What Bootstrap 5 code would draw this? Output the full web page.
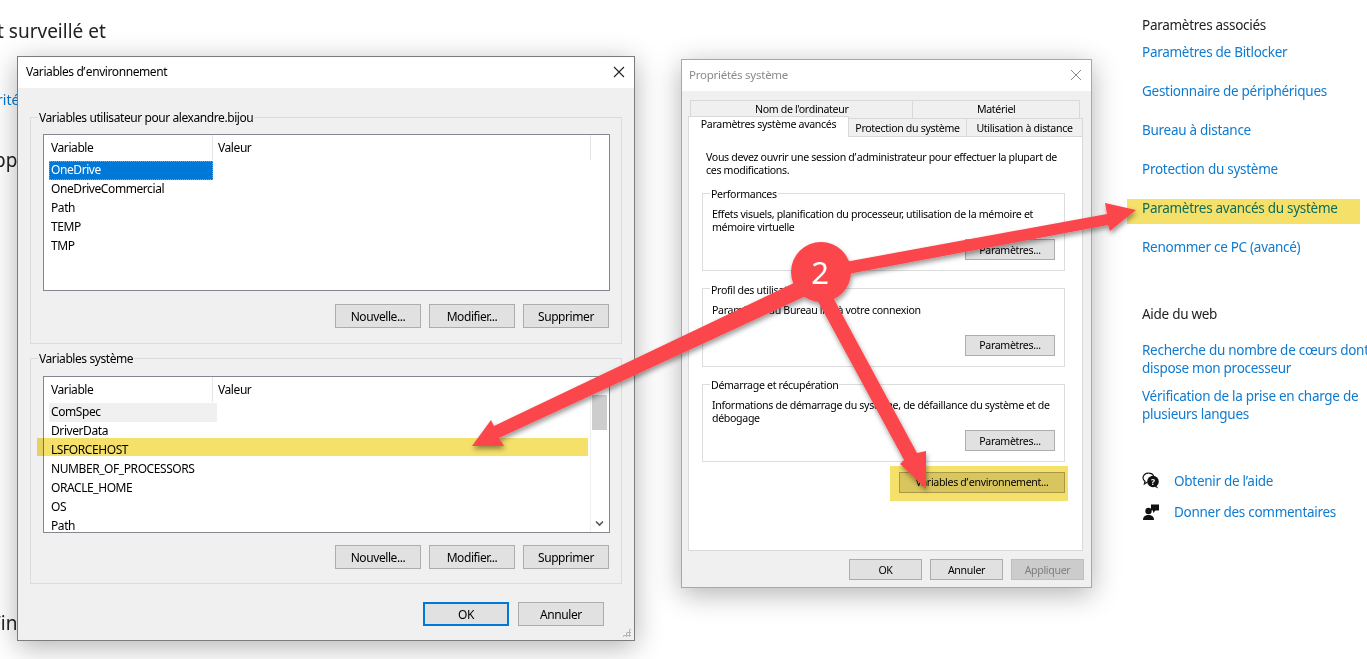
<!DOCTYPE html>
<html lang="fr">
<head>
  <meta charset="UTF-8">
  <title>Variables d'environnement</title>
  <link rel="stylesheet" href="https://cdn.jsdelivr.net/npm/bootstrap@5.3.1/dist/css/bootstrap.min.css" crossorigin="anonymous">
  <style>
    html, body { height: 659px; overflow: hidden; }
    body { font-family: "Noto Sans", "Open Sans", sans-serif; background: #fff; color: #000; position: relative; }
    a { text-decoration: none; }
    .page-text { width: 1145px; margin-left: -3px; flex: none; font-size: 19px; line-height: 24px; color: #222; }
    .page-text p { margin: 0; }
    .line-a { padding-top: 19px; }
    .line-b { padding-top: 45px; color: #0078d4; font-size: 14px; }
    .line-c { padding-top: 36px; margin-left: -3px !important; }
    .line-d { padding-top: 439px; margin-left: -6px !important; }
    .side { width: 235px; flex: none; font-size: 13.5px; letter-spacing: -.28px; padding-top: 16px; }
    .side a { color: #0f7bd0; display: block; line-height: 18px; }
    .side h2 { font-size: 13.5px; font-weight: 400; line-height: 18px; margin: 0; color: #222; }
    .side-links { margin-top: 9px; }
    .side-links a { padding-bottom: 21px; }
    .side h2.side-web { margin-top: 28px; }
    .side-web-links { margin-top: 18px; }
    .side-web-links a + a { margin-top: 10px; }
    .side-help { margin-top: 49px; gap: 13px; }
    .side-help svg { width: 18px; height: 18px; flex: none; }
    .help-row { gap: 14px; }

    .win { position: absolute; background: #f0f0f0; font-size: 12px; letter-spacing: -.42px; box-shadow: 0 6px 26px rgba(0,0,0,.3); }
    .win-a { left: 17px; top: 56px; width: 618px; height: 585px; border: 1px solid #7c7c7c; }
    .win-b { left: 681px; top: 59px; width: 411px; height: 529px; border: 1px solid #a8a8a8; font-size: 10.6px; letter-spacing: -.33px; }
    .win-title { height: 31px; background: #fff; padding-left: 8px; padding-bottom: 2px; }
    .win-b .win-title { color: #8a8a8a; font-size: 11.5px; padding-left: 7px; letter-spacing: -.25px; }
    .win-x { width: 12px; height: 12px; margin-right: 9px; }
    .w-btn { height: 24px; width: 86px; padding: 0; border: 1px solid #adadad; border-radius: 0; background: #e1e1e1; color: #000; font-size: inherit; letter-spacing: inherit; line-height: 21px; }
    .w-btn.is-default { border: 2px solid #0078d7; }
    .win-b .w-btn { height: 21px; width: 73px; line-height: 18px; }
    .win-b .w-btn.is-wide { width: 90px; }
    .win-b .w-btn.is-env { width: 166px; }
    .w-btn:disabled { background: #ccc; color: #7f7f7f; border-color: #bfbfbf; opacity: 1; }

    fieldset.grp { border: 1px solid #dcdcdc; padding: 0 12px 14px 12px; }
    fieldset.grp legend { float: none; width: auto; font-size: inherit; height: 16px; line-height: 18px; margin: 0 0 0 -5px; padding: 0 1px; }
    .grp-one { margin: 21px 12px 0; height: 235px; }
    .grp-two { margin: 6px 12px 0; height: 234px; }
    .vlist { position: relative; height: 157px; margin-top: 9px; margin-bottom: 13px; margin-right: -1px; background: #fff; border: 1px solid #828790; overflow: hidden; }
    .vhead { height: 26px; line-height: 25px; }
    .vhead span { display: block; padding-left: 7px; border-right: 1px solid #e5e5e5; height: 25px; }
    .vhead .col-var { width: 169px; }
    .vhead .col-val { width: 378px; padding-left: 5px; }
    .vrow { height: 19px; line-height: 18px; margin-left: 5px; padding-left: 2px; width: 164px; white-space: nowrap; }
    .vrow.is-sel { background: #0078d7; color: #fff; outline: 1px dotted #f08a24; outline-offset: -1px; }
    .vrow.is-idle { background: #f0f0f0; width: 168px; }
    .vlist-sys { margin-top: 10px; margin-bottom: 12px; }
    .vlist-sys::after { content: ""; position: absolute; left: 173px; right: 21px; bottom: -1px; height: 2px; background: #fff; }
    .vscroll { position: absolute; right: 0; top: 0; bottom: 0; width: 19px; background: #fff; border-left: 1px solid #f0f0f0; }
    .vthumb { position: absolute; left: 1px; right: 2px; top: 18px; height: 35px; background: #cdcdcd; }
    .vchev { position: absolute; left: 4px; bottom: 5px; width: 9px; height: 7px; }
    .grip { position: absolute; right: 3px; bottom: 3px; width: 9px; height: 9px; background: radial-gradient(circle, #b4b4b4 1px, transparent 1.2px) 0 0 / 3px 3px; clip-path: polygon(100% 0, 100% 100%, 0 100%); }
    .win-a-foot { margin: 18px 30px 0 0; gap: 9px; }

    .tabs-up { margin: 9px 11px 0 8px; height: 18px; }
    .tab-x { background: #f0f0f0; border: 1px solid #d9d9d9; text-align: center; line-height: 16px; }
    .tabs-up .tab-x { height: 19px; border-bottom: 0; }
    .tab-name { width: 224px; }
    .tab-hw { width: 168px; margin-left: -1px; }
    .tabs-low { margin: 0 8px 0 6px; height: 19px; align-items: flex-end; }
    .tab-on { width: 161px; height: 21px; background: #fff; border: 1px solid #d9d9d9; border-bottom: 0; position: relative; z-index: 2; line-height: 15px; text-align: center; margin-top: -2px; }
    .tab-prot { width: 119px; height: 19px; margin-left: -1px; line-height: 18px; }
    .tab-rem { width: 117px; height: 19px; margin-left: -1px; line-height: 18px; }
    .panel { margin: -1px 8px 0 6px; height: 415px; background: #fff; border: 1px solid #d9d9d9; padding: 14px 17px 0 13px; line-height: 13px; position: relative; }
    .panel p { margin: 0; }
    .panel-lead { padding-left: 4px; height: 34px; }
    .panel fieldset.grp { background: #fff; padding: 0 9px; height: 86px; margin-bottom: 9.5px; }
    .panel fieldset.grp legend { margin-left: -2px; }
    .panel .grp-text { height: 31px; margin-top: 7px; }
    .win-foot { margin: 8px 7px 0 0; gap: 8px; }

    .mark-y { position: absolute; background: #f5e06a; mix-blend-mode: multiply; z-index: 5; }
    .my-a { left: 37px; top: 438px; width: 551px; height: 18px; }
    .my-b { left: 890px; top: 466px; width: 178px; height: 35px; }
    .my-c { left: 1127px; top: 199px; width: 233px; height: 25px; }
    .overlay { position: absolute; left: 0; top: 0; width: 1367px; height: 659px; z-index: 6; pointer-events: none; }
    .overlay text { font-family: "Noto Sans", sans-serif; font-size: 31px; fill: #fff; }
  </style>
</head>
<body>
  <div class="d-flex">
    <div class="page-text">
      <p class="line-a">t surveillé et</p>
      <p class="line-b">rité</p>
      <p class="line-c">pp</p>
      <p class="line-d">Fin</p>
    </div>
    <aside class="side">
      <h2>Paramètres associés</h2>
      <div class="side-links">
        <a href="#">Paramètres de Bitlocker</a>
        <a href="#">Gestionnaire de périphériques</a>
        <a href="#">Bureau à distance</a>
        <a href="#">Protection du système</a>
        <a href="#">Paramètres avancés du système</a>
        <a href="#">Renommer ce PC (avancé)</a>
      </div>
      <h2 class="side-web">Aide du web</h2>
      <div class="side-web-links">
        <a href="#">Recherche du nombre de cœurs dont dispose mon processeur</a>
        <a href="#">Vérification de la prise en charge de plusieurs langues</a>
      </div>
      <div class="side-help d-flex flex-column">
        <div class="help-row d-flex align-items-center">
          <svg viewBox="0 0 18 18"><path d="M6.500 1.200C3.400 1.200 1 3.200 1 5.800c0 1.500.8 2.700 2 3.500L2.400 12l3-2" fill="none" stroke="#111" stroke-width="1.200"/><path d="M6.500 1.200c2.400 0 4.500 1.200 5.200 3" fill="none" stroke="#111" stroke-width="1.200"/><circle cx="11" cy="9.500" r="5.800" fill="#111"/><path d="M14 13.500l2.500 3-4.500-2z" fill="#111"/><text x="11" y="12.600" font-size="8.500" font-weight="700" text-anchor="middle" fill="#fff" font-family="Noto Sans">?</text></svg>
          <a href="#">Obtenir de l’aide</a>
        </div>
        <div class="help-row d-flex align-items-center">
          <svg viewBox="0 0 18 18"><circle cx="6.500" cy="8" r="3.200" fill="#111"/><path d="M1 17c0-3.600 2.400-5 5.500-5s5.500 1.400 5.500 5z" fill="#111"/><path d="M9 1.500h8v6h-3.500L11 10V7.500H9z" fill="#111"/></svg>
          <a href="#">Donner des commentaires</a>
        </div>
      </div>
    </aside>
  </div>

  <!-- fenetre variables -->
  <section class="win win-a">
    <div class="win-title d-flex justify-content-between align-items-center">
      <span>Variables d’&#8202;environnement</span>
      <svg class="win-x" viewBox="0 0 12 12"><path d="M1 1l10 10M11 1L1 11" stroke="#222" stroke-width="1.100"/></svg>
    </div>
    <fieldset class="grp grp-one">
      <legend>Variables utilisateur pour alexandre.bijou</legend>
      <div class="vlist">
        <div class="vhead d-flex"><span class="col-var">Variable</span><span class="col-val">Valeur</span></div>
        <div class="vrow is-sel">OneDrive</div>
        <div class="vrow">OneDriveCommercial</div>
        <div class="vrow">Path</div>
        <div class="vrow">TEMP</div>
        <div class="vrow">TMP</div>
      </div>
      <div class="d-flex justify-content-end gap-2">
        <button class="btn w-btn">Nouvelle...</button>
        <button class="btn w-btn">Modifier...</button>
        <button class="btn w-btn">Supprimer</button>
      </div>
    </fieldset>
    <fieldset class="grp grp-two">
      <legend>Variables système</legend>
      <div class="vlist vlist-sys">
        <div class="vhead d-flex"><span class="col-var">Variable</span><span class="col-val">Valeur</span></div>
        <div class="vrow is-idle">ComSpec</div>
        <div class="vrow">DriverData</div>
        <div class="vrow">LSFORCEHOST</div>
        <div class="vrow">NUMBER_OF_PROCESSORS</div>
        <div class="vrow">ORACLE_HOME</div>
        <div class="vrow">OS</div>
        <div class="vrow">Path</div>
        <div class="vscroll">
          <div class="vthumb"></div>
          <svg class="vchev" viewBox="0 0 9 7"><path d="M1 1.500l3.500 3.500L8 1.500" fill="none" stroke="#555" stroke-width="1.600"/></svg>
        </div>
      </div>
      <div class="d-flex justify-content-end gap-2">
        <button class="btn w-btn">Nouvelle...</button>
        <button class="btn w-btn">Modifier...</button>
        <button class="btn w-btn">Supprimer</button>
      </div>
    </fieldset>
    <div class="win-a-foot d-flex justify-content-end">
      <button class="btn w-btn is-default">OK</button>
      <button class="btn w-btn">Annuler</button>
    </div>
    <div class="grip"></div>
  </section>

  <!-- fenetre proprietes -->
  <section class="win win-b">
    <div class="win-title d-flex justify-content-between align-items-center">
      <span>Propriétés système</span>
      <svg class="win-x" viewBox="0 0 12 12"><path d="M1 1l10 10M11 1L1 11" stroke="#8a8a8a" stroke-width="1"/></svg>
    </div>
    <div class="tabs-up d-flex">
      <div class="tab-x tab-name">Nom de l'ordinateur</div>
      <div class="tab-x tab-hw">Matériel</div>
    </div>
    <div class="tabs-low d-flex">
      <div class="tab-on">Paramètres système avancés</div>
      <div class="tab-x tab-prot">Protection du système</div>
      <div class="tab-x tab-rem">Utilisation à distance</div>
    </div>
    <div class="panel">
      <p class="panel-lead">Vous devez ouvrir une session d’&#8202;administrateur pour effectuer la plupart de ces modifications.</p>
      <fieldset class="grp">
        <legend>Performances</legend>
        <p class="grp-text">Effets visuels, planification du processeur, utilisation de la mémoire et mémoire virtuelle</p>
        <div class="d-flex justify-content-end"><button class="btn w-btn is-wide">Paramètres...</button></div>
      </fieldset>
      <fieldset class="grp">
        <legend>Profil des utilisateurs</legend>
        <p class="grp-text">Paramètres du Bureau liés à votre connexion</p>
        <div class="d-flex justify-content-end"><button class="btn w-btn is-wide">Paramètres...</button></div>
      </fieldset>
      <fieldset class="grp">
        <legend>Démarrage et récupération</legend>
        <p class="grp-text">Informations de démarrage du système, de défaillance du système et de débogage</p>
        <div class="d-flex justify-content-end"><button class="btn w-btn is-wide">Paramètres...</button></div>
      </fieldset>
      <div class="d-flex justify-content-end"><button class="btn w-btn is-env">Variables d’&#8202;environnement...</button></div>
    </div>
    <div class="win-foot d-flex justify-content-end">
      <button class="btn w-btn">OK</button>
      <button class="btn w-btn">Annuler</button>
      <button class="btn w-btn" disabled>Appliquer</button>
    </div>
  </section>

  <div class="mark-y my-a"></div>
  <div class="mark-y my-b"></div>
  <div class="mark-y my-c"></div>

  <svg class="overlay" viewBox="0 0 1367 659">
    <defs>
      <filter id="arrowShade" x="-10%" y="-10%" width="120%" height="120%">
        <feDropShadow dx="1" dy="3" stdDeviation="2.500" flood-color="#000" flood-opacity=".4"/>
      </filter>
    </defs>
    <g fill="#fb464c" filter="url(#arrowShade)">
      <path d="M845 262L1107 214L1105 203L1136 210L1110 231L1108 225L848 274Z"/>
      <path d="M796 282L494 426L491 420L472 446L504 446L499 438L806 296Z"/>
      <path d="M815 296L829 290L917 453L926 451L926 489L900 464L904 460Z"/>
      <circle cx="821" cy="272" r="30"/>
      <text x="820" y="284" text-anchor="middle">2</text>
    </g>
  </svg>
</body>
</html>
